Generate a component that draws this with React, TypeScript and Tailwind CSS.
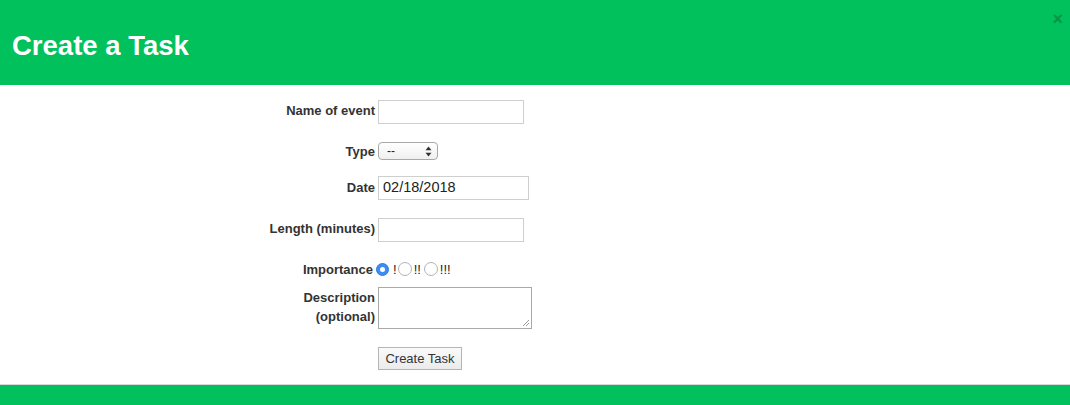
import React from "react";

const font = { fontFamily: '"Liberation Sans", Arial, Helvetica, sans-serif' };

function Radio({ checked }: { checked?: boolean }) {
  if (checked) {
    return (
      <span className="inline-flex h-[13px] w-[13px] items-center justify-center rounded-full bg-[#3b8df5] border border-[#2f7be0]">
        <span className="h-[5px] w-[5px] rounded-full bg-white" />
      </span>
    );
  }
  return <span className="inline-block h-[14px] w-[14px] rounded-full border border-[#b3b3b3] bg-white" />;
}

function Row({
  label,
  children,
  className,
  labelClass = "",
}: {
  label: React.ReactNode;
  children: React.ReactNode;
  className: string;
  labelClass?: string;
}) {
  return (
    <div className={"flex items-center " + className}>
      <div className={"w-[375px] shrink-0 text-right text-[13px] font-bold leading-[19px] text-[#333] " + labelClass}>
        {label}
      </div>
      <div className="ml-[3px] flex h-full items-center">{children}</div>
    </div>
  );
}

export default function App() {
  return (
    <div className="w-[1070px] h-[405px] overflow-hidden bg-white flex flex-col" style={font}>
      <div className="relative h-[85px] shrink-0 bg-[#01c15c] flex items-center">
        <h1 className="ml-[12px] mt-[7px] text-[27.5px] font-bold text-white leading-none">Create a Task</h1>
        <span className="absolute right-[7px] top-[10px] text-[18px] font-bold text-[#0a9446] leading-none">×</span>
      </div>

      <div className="flex flex-col">
        <Row label="Name of event" className="mt-[15px] h-[24px]" labelClass="mb-[4px]">
          <div className="h-[24px] w-[146px] border border-[#cfcfcf] bg-white" />
        </Row>
        <Row label="Type" className="mt-[18px] h-[18px]">
          <div className="relative flex h-[18px] w-[60px] items-center rounded-[4px] border border-[#a8a8a8] bg-gradient-to-b from-white to-[#f0f0f0] pl-[8px] text-[12px] text-[#222]">
            --
            <svg className="absolute right-[5px] top-[3px]" width="7" height="11" viewBox="0 0 7 11">
              <path d="M3.5 0.5 L6.5 4.2 L0.5 4.2 Z" fill="#333" />
              <path d="M3.5 10.5 L6.5 6.8 L0.5 6.8 Z" fill="#333" />
            </svg>
          </div>
        </Row>
        <Row label="Date" className="mt-[16px] h-[24px]" labelClass="mb-[2px]">
          <div className="flex h-[24px] w-[151px] items-center border border-[#cfcfcf] bg-white pl-[4px] text-[14.5px] text-[#222]">
            02/18/2018
          </div>
        </Row>
        <Row label="Length (minutes)" className="mt-[18px] h-[24px]" labelClass="mb-[4px]">
          <div className="h-[24px] w-[146px] border border-[#cfcfcf] bg-white" />
        </Row>
        <Row label="Importance" className="mt-[20px] h-[14px]" labelClass="pr-[2px]">
          <div className="-ml-[2px] flex items-center text-[13px] text-[#222] leading-none">
            <Radio checked />
            <span className="ml-[4px] mr-[1px]">!</span>
            <Radio />
            <span className="ml-[2px] mr-[3px]">!!</span>
            <Radio />
            <span className="ml-[2px]">!!!</span>
          </div>
        </Row>
        <Row
          label={
            <>
              Description
              <br />
              (optional)
            </>
          }
          className="mt-[11px] h-[42px]"
          labelClass="mb-[3px]"
        >
          <div className="relative h-[42px] w-[154px] border border-[#a9a9a9] bg-white">
            <svg className="absolute bottom-[1px] right-[1px]" width="8" height="8" viewBox="0 0 8 8">
              <path d="M7 1 L1 7 M7 4 L4 7" stroke="#9a9a9a" strokeWidth="1" />
            </svg>
          </div>
        </Row>
        <Row label="" className="mt-[18px] h-[23px]">
          <div className="flex h-[23px] w-[84px] items-center justify-center border border-[#b5b5b5] bg-gradient-to-b from-[#fafafa] to-[#ebebeb] text-[13px] text-[#333]">
            Create Task
          </div>
        </Row>
      </div>

      <div className="mt-[14px] h-[40px] shrink-0 border-t border-[#d9d9d9] bg-[#01c15c]" />
    </div>
  );
}
